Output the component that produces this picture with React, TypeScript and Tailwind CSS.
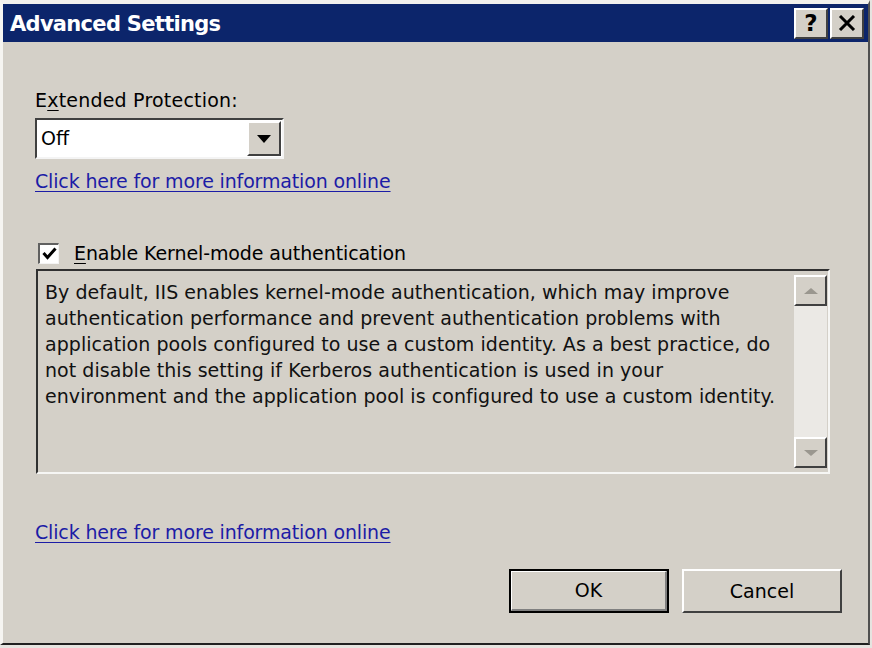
import React from 'react';

const font = { fontFamily: '"DejaVu Sans", Tahoma, sans-serif' };

const Raised = ({ className = '', children }: { className?: string; children?: React.ReactNode }) => (
  <div className={`border-t-2 border-l-2 border-t-white border-l-white border-r-2 border-b-2 border-r-[#404040] border-b-[#404040] bg-[#d4d0c8] flex items-center justify-center ${className}`}>
    {children}
  </div>
);

const Link = () => (
  <span className="text-[#1c1ca6] underline underline-offset-[3px] decoration-1 text-[19px] tracking-[-0.15px]">
    Click here for more information online
  </span>
);

const TriUp = () => (
  <svg width="16" height="8" viewBox="0 0 16 8">
    <path d="M1 7 L8 1 L15 7 Z" fill="#9a978f" />
  </svg>
);

const TriDown = () => (
  <svg width="16" height="8" viewBox="0 0 16 8">
    <path d="M1 1 L8 7 L15 1 Z" fill="#9a978f" />
  </svg>
);

export default function App() {
  const lines = [
    'By default, IIS enables kernel-mode authentication, which may improve',
    'authentication performance and prevent authentication problems with',
    'application pools configured to use a custom identity. As a best practice, do',
    'not disable this setting if Kerberos authentication is used in your',
    'environment and the application pool is configured to use a custom identity.',
  ];

  return (
    <div className="w-[872px] h-[648px] bg-[#e6e4e0] overflow-hidden" style={font}>
      <div className="w-[870px] h-[645px] border-t-4 border-l-[3px] border-t-[#f2f1ee] border-l-[#f6f5f2] border-b-2 border-r-2 border-b-[#202020] border-r-[#505050] bg-[#d4d0c8] flex flex-col">
        {/* Title bar */}
        <div className="h-[38px] bg-[#0c256b] flex items-center justify-between pl-[7px] pr-[4px]">
          <span className="text-white font-bold text-[21px] tracking-[-0.7px] pt-[4px]">Advanced Settings</span>
          <div className="flex gap-[2px]">
            <Raised className="w-[34px] h-[31px]">
              <span className="text-black font-bold text-[23px] leading-none">?</span>
            </Raised>
            <Raised className="w-[34px] h-[31px]">
              <svg width="18" height="16" viewBox="0 0 18 16">
                <path d="M2 1 L16 15 M16 1 L2 15" stroke="#000" strokeWidth="3" />
              </svg>
            </Raised>
          </div>
        </div>

        {/* Body */}
        <div className="flex-1 flex flex-col pl-[32px] pr-[28px] text-black">
          <div className="mt-[46px] text-[19px] leading-[24px] tracking-[0.2px]">
            E<span className="underline underline-offset-[3px]">x</span>tended Protection:
          </div>

          {/* Select */}
          <div className="mt-[6px] w-[249px] h-[41px] bg-white border-t-2 border-l-2 border-t-[#404040] border-l-[#404040] border-b-2 border-r-2 border-b-[#f4f4f4] border-r-[#f4f4f4] flex items-stretch">
            <div className="flex-1 pl-[4px] flex items-center text-[19px]">Off</div>
            <Raised className="w-[34px] m-[1px]">
              <svg width="14" height="8" viewBox="0 0 14 8">
                <path d="M0 0 L14 0 L7 8 Z" fill="#000" />
              </svg>
            </Raised>
          </div>

          <div className="mt-[10px] leading-[24px]">
            <Link />
          </div>

          {/* Checkbox */}
          <div className="mt-[46px] flex items-center h-[24px]">
            <div className="ml-[3px] w-[21px] h-[21px] bg-white border-t-2 border-l-2 border-t-[#606060] border-l-[#606060] border-b border-r border-b-[#f4f4f4] border-r-[#f4f4f4] flex items-center justify-center">
              <svg width="15" height="13" viewBox="0 0 15 13">
                <path d="M1.5 6 L5.5 10.5 L13.5 1.5" stroke="#000" strokeWidth="3" fill="none" />
              </svg>
            </div>
            <span className="ml-[15px] text-[19px] tracking-[-0.1px]">
              <span className="underline underline-offset-[3px]">E</span>nable Kernel-mode authentication
            </span>
          </div>

          {/* Description box */}
          <div className="mt-[4px] ml-[1px] w-[794px] h-[205px] border-t-2 border-l-2 border-t-[#303030] border-l-[#303030] border-b-2 border-r-2 border-b-[#f6f6f4] border-r-[#f6f6f4] flex">
            <div className="flex-1 pl-[7px] pt-[8px] text-[19px] leading-[26px] tracking-[0.05px] text-[#111]">
              {lines.map((l, i) => (
                <div key={i} className="whitespace-nowrap">{l}</div>
              ))}
            </div>
            <div className="w-[33px] my-[4px] mr-[1px] flex flex-col bg-[#ebe9e5]">
              <Raised className="h-[31px]">
                <TriUp />
              </Raised>
              <div className="flex-1" />
              <Raised className="h-[31px]">
                <TriDown />
              </Raised>
            </div>
          </div>

          <div className="mt-[46px] leading-[24px]">
            <Link />
          </div>

          {/* Buttons */}
          <div className="mt-[23px] flex justify-end gap-[13px] -mr-[2px]">
            <div className="w-[160px] h-[44px] border-2 border-black">
              <div className="w-full h-full border-t border-l border-t-white border-l-white border-b-2 border-r-2 border-b-[#808080] border-r-[#808080] flex items-center justify-center text-[19px]">
                OK
              </div>
            </div>
            <Raised className="w-[160px] h-[44px] text-[19px]">Cancel</Raised>
          </div>
        </div>
      </div>
    </div>
  );
}
